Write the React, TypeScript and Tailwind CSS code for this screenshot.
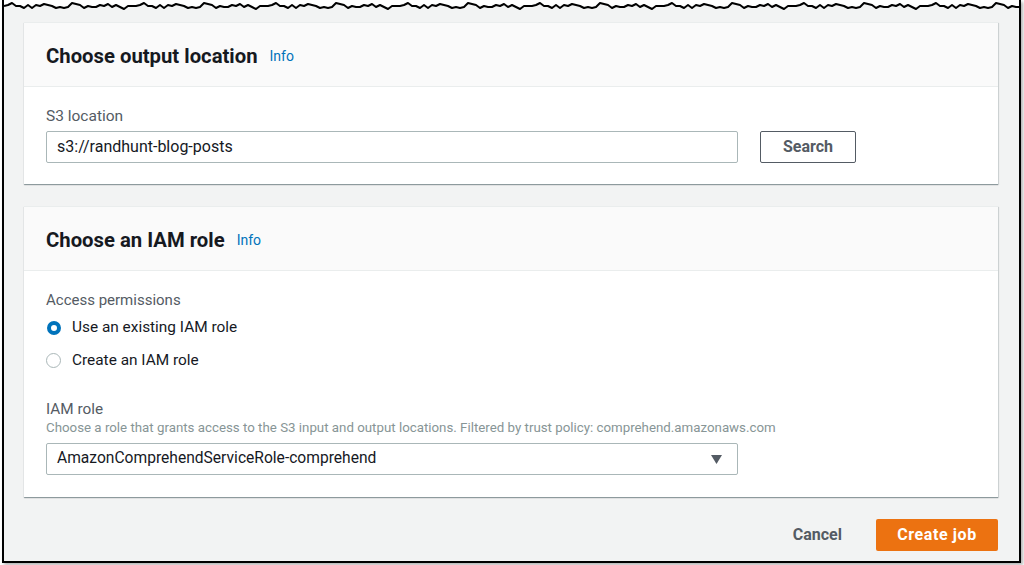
import React from 'react';

const font = { fontFamily: 'Roboto, "Open Sans", Arial, sans-serif' };

// jagged "torn paper" top edge of the screenshot frame
const TornEdge: React.FC = () => {
  const ys = [6, 4, 7, 5, 3, 6, 8, 5, 7, 4, 6, 5, 8, 6, 3, 5, 7, 4, 6, 5, 2, 6, 7, 4, 6, 8, 5, 3, 6, 7, 5, 4, 7];
  const pts: string[] = [];
  for (let x = 0, i = 0; x <= 1017; x += 4, i++) {
    pts.push(`${x},${ys[(i * 7) % ys.length] + ((i % 11) < 5 ? 0 : 1)}`);
  }
  const line = pts.join(' ');
  return (
    <svg width="1015" height="12" viewBox="0 0 1015 12" className="block">
      <polygon points={`0,12 ${line} 1015,12`} fill="#f2f3f3" />
      <polyline points={line} fill="none" stroke="#000" strokeWidth="2" strokeLinejoin="round" />
    </svg>
  );
};

const Info: React.FC = () => <span className="ml-3 text-[14px] text-[#0073bb]">Info</span>;

const Panel: React.FC<{ title: string; children: React.ReactNode }> = ({ title, children }) => (
  <div className="bg-white border-t border-[#eaeded] shadow-[0_1px_1px_0_rgba(0,28,36,0.35),1px_1px_1px_0_rgba(0,28,36,0.1)]">
    <div className="h-[64px] flex items-center px-[22px] pt-[3px] bg-[#fafafa] border-b border-[#eaeded]">
      <h2 className="text-[20.3px] font-bold text-[#16191f]">{title}</h2>
      <Info />
    </div>
    {children}
  </div>
);

const Radio: React.FC<{ checked?: boolean; label: string }> = ({ checked, label }) => (
  <div className="flex items-center h-[33px]">
    {checked ? (
      <span className="w-[14px] h-[14px] rounded-full border-[4px] border-[#0073bb] bg-white ml-[1px]" />
    ) : (
      <span className="w-[15px] h-[15px] rounded-full border border-[#aab7b8] bg-white" />
    )}
    <span className="ml-[11px] text-[15.4px] text-[#16191f]">{label}</span>
  </div>
);

export default function App() {
  return (
    <div className="w-[1024px] h-[565px] bg-white overflow-hidden" style={font}>
      <div className="ml-[2px] w-[1019px] h-[563px] border-x-2 border-b-2 border-black bg-[#f2f3f3] shadow-[2px_2px_3px_rgba(0,0,0,0.3)] flex flex-col">
        <div className="bg-white">
          <TornEdge />
        </div>
        <div className="pt-[10px] pl-[20px] pr-[21px] flex flex-col">
          <Panel title="Choose output location">
            <div className="px-[22px] pt-[19px] pb-[21px]">
              <div className="text-[15.5px] text-[#545b64] leading-[20px]">S3 location</div>
              <div className="mt-[5px] flex items-center">
                <div className="w-[692px] h-[32px] border border-[#aab7b8] rounded-[2px] flex items-center px-[10px] text-[16px] text-[#16191f]">
                  s3://randhunt-blog-posts
                </div>
                <button className="ml-[22px] w-[96px] h-[32px] border border-[#545b64] rounded-[2px] text-[16px] font-bold text-[#545b64]">
                  Search
                </button>
              </div>
            </div>
          </Panel>
          <div className="h-[22px]" />
          <Panel title="Choose an IAM role">
            <div className="px-[22px] pt-[19px] pb-[22px]">
              <div className="text-[15px] text-[#545b64] leading-[20px]">Access permissions</div>
              <div className="mt-[1px]">
                <Radio checked label="Use an existing IAM role" />
                <Radio label="Create an IAM role" />
              </div>
              <div className="mt-[22px] text-[15.3px] text-[#545b64] leading-[20px]">IAM role</div>
              <div className="text-[13.3px] text-[#879596] leading-[18px] whitespace-nowrap">
                Choose a role that grants access to the S3 input and output locations. Filtered by trust policy: comprehend.amazonaws.com
              </div>
              <div className="mt-[6px] w-[692px] h-[32px] border border-[#aab7b8] rounded-[2px] flex items-center justify-between px-[10px] text-[15.6px] text-[#16191f]">
                <span>AmazonComprehendServiceRole-comprehend</span>
                <svg width="11" height="9" viewBox="0 0 11 9" className="mr-[5px]">
                  <polygon points="0,0 11,0 5.5,9" fill="#545b64" />
                </svg>
              </div>
            </div>
          </Panel>
          <div className="mt-[22px] flex justify-end items-center">
            <button className="mr-[34px] text-[16px] font-bold text-[#545b64]">Cancel</button>
            <button className="w-[122px] h-[32px] bg-[#ec7211] rounded-[2px] text-[16px] font-bold text-white tracking-[0.6px]">
              Create job
            </button>
          </div>
        </div>
      </div>
    </div>
  );
}
